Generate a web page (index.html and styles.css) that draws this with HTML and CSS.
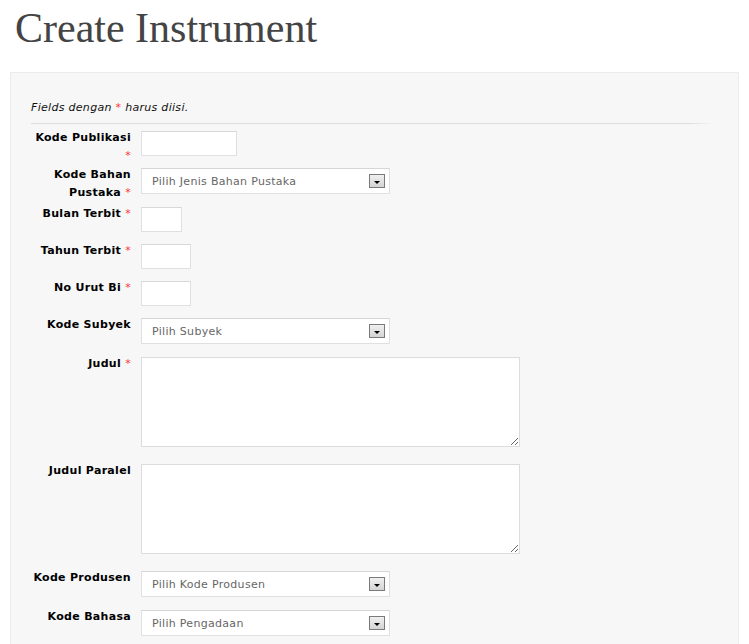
FILE: index.html
```html
<!DOCTYPE html>
<html>
<head>
<meta charset="utf-8">
<title>Create Instrument</title>
<link rel="stylesheet" href="styles.css">
</head>
<body>
<div class="page">
  <h1 class="title">Create Instrument</h1>
  <div class="panel">
    <p class="note">Fields dengan <span class="req">*</span> harus diisi.</p>
    <div class="rule"></div>
    <form class="form">
      <div class="row">
        <label class="lbl">Kode Publikasi <span class="req">*</span></label>
        <input class="txt w96" type="text">
      </div>
      <div class="row row-sel">
        <label class="lbl">Kode Bahan Pustaka&nbsp;<span class="req">*</span></label>
        <div class="sel"><select><option>Pilih Jenis Bahan Pustaka</option></select><span class="arrow"></span></div>
      </div>
      <div class="row">
        <label class="lbl">Bulan Terbit <span class="req">*</span></label>
        <input class="txt w41" type="text">
      </div>
      <div class="row">
        <label class="lbl">Tahun Terbit <span class="req">*</span></label>
        <input class="txt w50" type="text">
      </div>
      <div class="row">
        <label class="lbl">No Urut Bi <span class="req">*</span></label>
        <input class="txt w50" type="text">
      </div>
      <div class="row row-sel">
        <label class="lbl">Kode Subyek</label>
        <div class="sel"><select><option>Pilih Subyek</option></select><span class="arrow"></span></div>
      </div>
      <div class="row row-area">
        <label class="lbl">Judul <span class="req">*</span></label>
        <textarea class="area"></textarea>
      </div>
      <div class="row row-area">
        <label class="lbl">Judul Paralel</label>
        <textarea class="area"></textarea>
      </div>
      <div class="row row-sel">
        <label class="lbl">Kode Produsen</label>
        <div class="sel"><select><option>Pilih Kode Produsen</option></select><span class="arrow"></span></div>
      </div>
      <div class="row row-sel">
        <label class="lbl">Kode Bahasa</label>
        <div class="sel"><select><option>Pilih Pengadaan</option></select><span class="arrow"></span></div>
      </div>
    </form>
  </div>
</div>
</body>
</html>
```

FILE: styles.css
```css
html, body {
  margin: 0;
  padding: 0;
  background: #ffffff;
}
body {
  font-family: "DejaVu Sans", Verdana, sans-serif;
  font-size: 11px;
  letter-spacing: 0.3px;
  color: #000;
}
.page {
  padding: 0 10px;
}
.title {
  margin: 0;
  padding: 5px 0 0 5px;
  height: 72px;
  box-sizing: border-box;
  font-family: "Liberation Serif", Georgia, serif;
  font-weight: normal;
  font-size: 42px;
  line-height: 46px;
  letter-spacing: 0;
  color: #444444;
}
.panel {
  background: #f7f7f7;
  border: 1px solid #ececec;
  border-bottom: none;
  padding: 27px 23px 0 20px;
  height: 600px;
}
.note {
  margin: 0;
  font-style: italic;
  line-height: 16px;
  color: #111;
}
.req {
  color: #ff3333;
  font-weight: normal;
}
.rule {
  height: 1px;
  margin: 7px 0 0 0;
  background: linear-gradient(to right, #dddddd 0, #dddddd 96%, rgba(221,221,221,0) 100%);
}
.form {
  padding-top: 5px;
}
.row {
  display: flex;
  align-items: flex-start;
  height: 37px;
}
.row-sel {
  height: 39px;
}
.row-area {
  height: 107px;
}
.lbl {
  width: 100px;
  flex: none;
  text-align: right;
  font-weight: bold;
  line-height: 18px;
  margin-right: 10px;
  color: #000;
}
.txt {
  margin: 2px 0 0 0;
  height: 25px;
  box-sizing: border-box;
  border: 1px solid #e0e0e0;
  border-top-color: #d8d8d8;
  background: #fff;
  padding: 2px 4px;
  font-family: inherit;
  font-size: 11px;
  outline: none;
}
.w96 { width: 96px; }
.w41 { width: 41px; }
.w50 { width: 50px; }
.sel {
  position: relative;
  margin-top: 2px;
  width: 249px;
  height: 26px;
}
.sel select {
  appearance: none;
  -webkit-appearance: none;
  width: 100%;
  height: 100%;
  box-sizing: border-box;
  border: 1px solid #e0e0e0;
  border-top-color: #d6d6d6;
  background: #fff;
  padding: 0 0 0 10px;
  font-family: inherit;
  font-size: 11px;
  letter-spacing: 0.3px;
  color: #666;
  border-radius: 0;
  outline: none;
}
.arrow {
  position: absolute;
  top: 6px;
  right: 5px;
  width: 16px;
  height: 14px;
  box-sizing: border-box;
  border: 1px solid #7a7a7a;
  background: linear-gradient(#f0f0f0, #d4d4d4);
  pointer-events: none;
}
.arrow::after {
  content: "";
  position: absolute;
  left: 4px;
  top: 6px;
  border-left: 3px solid transparent;
  border-right: 3px solid transparent;
  border-top: 3px solid #000;
}
.area {
  margin: 2px 0 0 0;
  width: 379px;
  height: 90px;
  box-sizing: border-box;
  border: 1px solid #dcdcdc;
  background: #fff;
  font-family: inherit;
  font-size: 11px;
  padding: 3px;
  outline: none;
}
```
